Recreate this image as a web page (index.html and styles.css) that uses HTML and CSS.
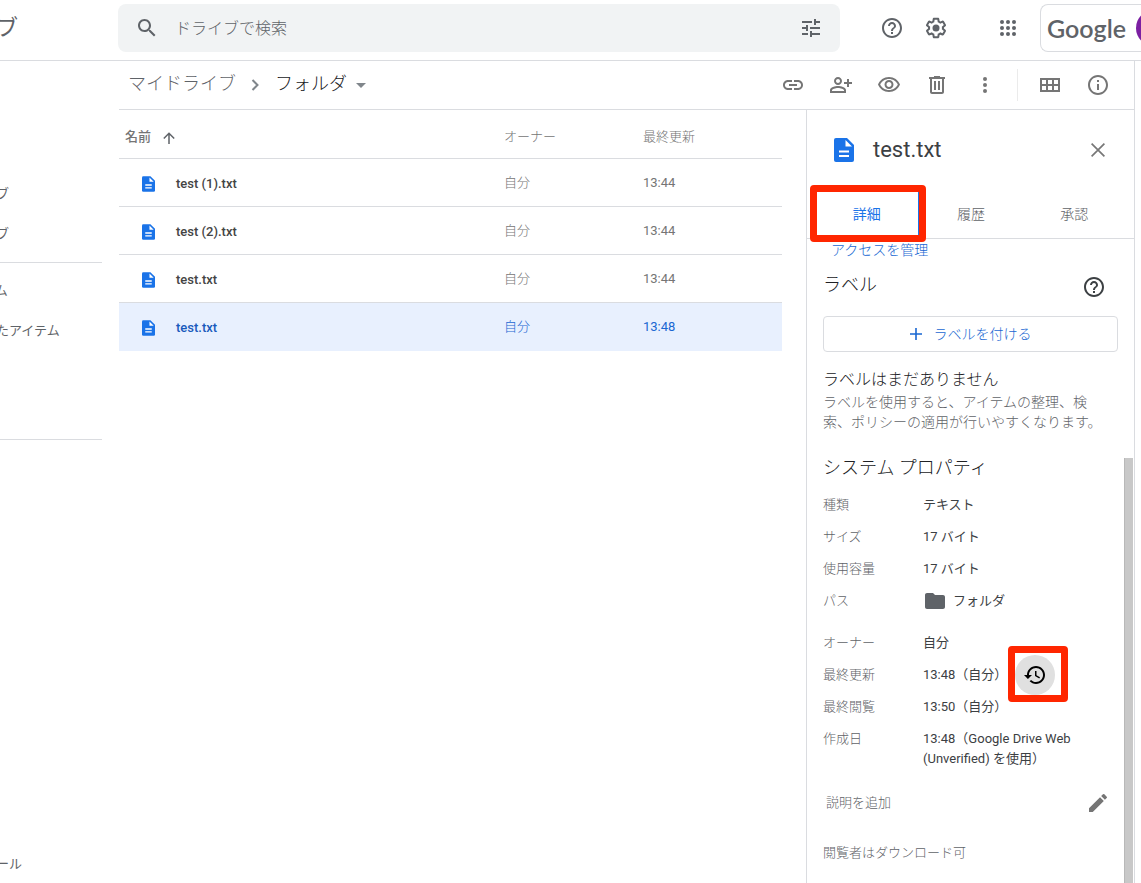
FILE: index.html
```html
<!DOCTYPE html>
<html lang="ja">
<head>
<meta charset="utf-8">
<title>フォルダ - ドライブ</title>
<link rel="stylesheet" href="styles.css">
</head>
<body>
<svg class="sprite" aria-hidden="true">
  <symbol id="doc" viewBox="0 0 20 24"><path fill="#1a73e8" d="M2 0h11l7 7v15a2 2 0 0 1-2 2H2a2 2 0 0 1-2-2V2a2 2 0 0 1 2-2z"/><path fill="#fff" d="M11.500 2v6.500H18zM5 12.500h10v2H5zM5 17h10v2H5z"/></symbol>
  <symbol id="help" viewBox="0 0 24 24"><path d="M11 18h2v-2h-2v2zm1-16C6.480 2 2 6.480 2 12s4.480 10 10 10 10-4.480 10-10S17.520 2 12 2zm0 18c-4.410 0-8-3.590-8-8s3.590-8 8-8 8 3.590 8 8-3.590 8-8 8zm0-14c-2.210 0-4 1.790-4 4h2c0-1.100.9-2 2-2s2 .9 2 2c0 2-3 1.750-3 5h2c0-2.250 3-2.500 3-5 0-2.210-1.790-4-4-4z"/></symbol>
</svg>

<header class="header">
  <a class="brand" href="#">ドライブ</a>
  <form class="search">
    <button class="icon-button" type="button" aria-label="検索"><svg class="icon" viewBox="0 0 24 24"><path d="M15.500 14h-.79l-.28-.27C15.410 12.590 16 11.110 16 9.500 16 5.910 13.090 3 9.500 3S3 5.910 3 9.500 5.910 16 9.500 16c1.610 0 3.090-.59 4.230-1.570l.27.28v.79l5 4.990L20.490 19l-4.990-5zm-6 0C7.010 14 5 11.990 5 9.500S7.010 5 9.500 5 14 7.010 14 9.500 11.990 14 9.500 14z"/></svg></button>
    <input class="search-input" type="text" placeholder="ドライブで検索" aria-label="ドライブで検索">
    <button class="icon-button" type="button" aria-label="検索オプション"><svg class="icon" viewBox="0 0 24 24"><path d="M3 17v2h6v-2H3zM3 5v2h10V5H3zm10 16v-2h8v-2h-8v-2h-2v6h2zM7 9v2H3v2h4v2h2V9H7zm14 4v-2H11v2h10zm-6-4h2V7h4V5h-4V3h-2v6z"/></svg></button>
  </form>
  <div class="header-actions">
    <button class="icon-button" type="button" aria-label="サポート"><svg class="icon"><use href="#help"/></svg></button>
    <button class="icon-button" type="button" aria-label="設定"><svg class="icon" viewBox="0 0 24 24"><path d="M13.850 22.250h-3.700c-.74 0-1.360-.54-1.450-1.270l-.27-1.890c-.27-.14-.53-.29-.79-.46l-1.800.72c-.7.26-1.470-.03-1.810-.65L2.200 15.530c-.35-.66-.2-1.440.36-1.880l1.530-1.190c-.01-.15-.02-.3-.02-.46 0-.15.01-.31.02-.46l-1.520-1.190c-.59-.45-.74-1.260-.37-1.880l1.850-3.190c.34-.62 1.110-.9 1.790-.63l1.810.73c.26-.17.52-.32.78-.46l.27-1.910c.09-.7.71-1.250 1.440-1.250h3.700c.74 0 1.360.54 1.450 1.270l.27 1.890c.27.14.53.29.79.46l1.800-.72c.71-.26 1.480.03 1.820.65l1.840 3.180c.36.66.2 1.440-.36 1.880l-1.520 1.190c.01.15.02.3.02.46s-.01.31-.02.46l1.520 1.190c.56.45.72 1.230.37 1.860l-1.860 3.220c-.34.62-1.110.9-1.800.63l-1.800-.72c-.26.17-.52.32-.78.46l-.27 1.910c-.1.68-.72 1.220-1.460 1.220zm-3.230-2h2.760l.37-2.550.53-.22c.44-.18.88-.44 1.340-.78l.45-.34 2.380.96 1.380-2.400-2.030-1.580.07-.56c.03-.26.06-.51.06-.78s-.03-.53-.06-.78l-.07-.56 2.030-1.580-1.390-2.400-2.390.96-.45-.35c-.42-.32-.87-.58-1.330-.77l-.52-.22-.37-2.550h-2.760l-.37 2.550-.53.21c-.44.19-.88.44-1.340.79l-.45.33-2.380-.95-1.390 2.390 2.030 1.580-.07.56a7 7 0 0 0-.06.79c0 .26.02.53.06.78l.07.56-2.030 1.580 1.380 2.400 2.390-.96.45.35c.43.33.86.58 1.330.77l.53.22.38 2.550z"/><circle cx="12" cy="12" r="3.500"/></svg></button>
    <button class="icon-button apps" type="button" aria-label="Google アプリ"><svg class="icon" viewBox="0 0 24 24"><circle cx="6" cy="6" r="2"/><circle cx="12" cy="6" r="2"/><circle cx="18" cy="6" r="2"/><circle cx="6" cy="12" r="2"/><circle cx="12" cy="12" r="2"/><circle cx="18" cy="12" r="2"/><circle cx="6" cy="18" r="2"/><circle cx="12" cy="18" r="2"/><circle cx="18" cy="18" r="2"/></svg></button>
  </div>
  <a class="account" href="#" aria-label="Google アカウント"><span class="wordmark">Google</span><span class="avatar"></span></a>
</header>

<div class="layout">
  <nav class="sidebar">
    <ul class="nav-group">
      <li><a href="#">マイドライブ</a></li>
      <li><a href="#">共有ドライブ</a></li>
    </ul>
    <ul class="nav-group nav-recent">
      <li><a href="#">共有アイテム</a></li>
      <li><a href="#">最近使用したアイテム</a></li>
    </ul>
    <ul class="nav-group nav-admin">
      <li><a href="#">管理コンソール</a></li>
    </ul>
  </nav>

  <main class="main">
    <div class="toolbar">
      <nav class="breadcrumb">
        <a class="crumb" href="#">マイドライブ</a>
        <svg class="crumb-arrow" viewBox="0 0 8 12"><path d="M1.500 1l5 5-5 5" fill="none" stroke="#80868b" stroke-width="2"/></svg>
        <button class="crumb crumb-current" type="button">フォルダ<svg class="caret" viewBox="0 0 10 5"><path d="M0 0h10L5 5z"/></svg></button>
      </nav>
      <div class="tools">
        <button type="button" aria-label="リンクを取得"><svg class="icon" viewBox="0 0 24 24"><path d="M3.900 12c0-1.710 1.390-3.100 3.100-3.100h4V7H7c-2.760 0-5 2.240-5 5s2.240 5 5 5h4v-1.900H7c-1.710 0-3.100-1.390-3.100-3.100zM8 13h8v-2H8v2zm9-6h-4v1.900h4c1.710 0 3.100 1.390 3.100 3.100s-1.390 3.100-3.100 3.100h-4V17h4c2.760 0 5-2.240 5-5s-2.240-5-5-5z"/></svg></button>
        <button type="button" aria-label="共有"><svg class="icon" viewBox="0 0 24 24"><path d="M9 12c2.210 0 4-1.790 4-4s-1.790-4-4-4-4 1.790-4 4 1.790 4 4 4zm0-6c1.100 0 2 .9 2 2s-.9 2-2 2-2-.9-2-2 .9-2 2-2zm0 7c-2.670 0-8 1.340-8 4v3h16v-3c0-2.660-5.330-4-8-4zm6 5H3v-.99C3.200 16.290 6.300 15 9 15s5.800 1.290 6 2v1zM20 9V6h-2v3h-3v2h3v3h2v-3h3V9z"/></svg></button>
        <button type="button" aria-label="プレビュー"><svg class="icon" viewBox="0 0 24 24"><path d="M12 6c3.790 0 7.170 2.130 8.820 5.500C19.170 14.870 15.790 17 12 17s-7.170-2.130-8.820-5.500C4.830 8.130 8.210 6 12 6m0-2C7 4 2.730 7.110 1 11.500 2.730 15.890 7 19 12 19s9.270-3.110 11-7.500C21.270 7.110 17 4 12 4zm0 5c1.380 0 2.500 1.120 2.500 2.500S13.380 14 12 14s-2.500-1.120-2.500-2.500S10.620 9 12 9m0-2c-2.480 0-4.500 2.020-4.500 4.500S9.520 16 12 16s4.500-2.020 4.500-4.500S14.480 7 12 7z"/></svg></button>
        <button type="button" aria-label="削除"><svg class="icon" viewBox="0 0 24 24"><path d="M15 4V3H9v1H4v2h1v13c0 1.100.9 2 2 2h10c1.100 0 2-.9 2-2V6h1V4h-5zm2 15H7V6h10v13zM9 8h2v9H9zm4 0h2v9h-2z"/></svg></button>
        <button type="button" aria-label="その他の操作"><svg class="icon" viewBox="0 0 24 24"><circle cx="12" cy="6" r="2"/><circle cx="12" cy="12" r="2"/><circle cx="12" cy="18" r="2"/></svg></button>
        <span class="divider"></span>
        <button type="button" aria-label="グリッド表示"><svg class="icon" viewBox="0 0 24 24"><path fill-rule="evenodd" d="M2 5h20v14H2zM4 7v4h4V7zm6 0v4h4V7zm6 0v4h4V7zM4 13v4h4v-4zm6 0v4h4v-4zm6 0v4h4v-4z"/></svg></button>
        <button type="button" aria-label="詳細を表示"><svg class="icon" viewBox="0 0 24 24"><path d="M11 7h2v2h-2zm0 4h2v6h-2zm1-9C6.480 2 2 6.480 2 12s4.480 10 10 10 10-4.480 10-10S17.520 2 12 2zm0 18c-4.410 0-8-3.590-8-8s3.590-8 8-8 8 3.590 8 8-3.590 8-8 8z"/></svg></button>
      </div>
    </div>

    <div class="content">
      <div class="file-list">
        <table class="files">
          <colgroup><col><col class="col-meta"><col class="col-meta"></colgroup>
          <thead>
            <tr><th class="th-name" scope="col"><span class="sort">名前<svg class="sort-arrow" viewBox="0 0 12 12"><path d="M6 12V1.500M.8 6.500L6 1.300l5.200 5.200" fill="none" stroke="#5f6368" stroke-width="1.500"/></svg></span></th><th scope="col">オーナー</th><th scope="col">最終更新</th></tr>
          </thead>
          <tbody>
            <tr><td><span class="file"><svg class="file-icon"><use href="#doc"/></svg>test (1).txt</span></td><td>自分</td><td>13:44</td></tr>
            <tr><td><span class="file"><svg class="file-icon"><use href="#doc"/></svg>test (2).txt</span></td><td>自分</td><td>13:44</td></tr>
            <tr><td><span class="file"><svg class="file-icon"><use href="#doc"/></svg>test.txt</span></td><td>自分</td><td>13:44</td></tr>
            <tr class="selected"><td><span class="file"><svg class="file-icon"><use href="#doc"/></svg>test.txt</span></td><td>自分</td><td>13:48</td></tr>
          </tbody>
        </table>
      </div>

      <aside class="panel">
        <div class="panel-head">
          <svg class="panel-icon"><use href="#doc"/></svg>
          <h2 class="panel-title">test.txt</h2>
          <button class="close" type="button" aria-label="閉じる"><svg viewBox="0 0 14 14"><path d="M.6.6l12.800 12.800M13.400.6L.6 13.400" stroke="#777" stroke-width="1.700"/></svg></button>
        </div>
        <div class="tabs" role="tablist">
          <button class="tab active" type="button" role="tab" aria-selected="true">詳細<span class="mark mark-tab"></span></button>
          <button class="tab" type="button" role="tab">履歴</button>
          <button class="tab" type="button" role="tab">承認</button>
        </div>
        <div class="panel-body">
          <a class="manage" href="#">アクセスを管理</a>
          <div class="label-head">
            <h3>ラベル</h3>
            <button class="help" type="button" aria-label="ラベルのヘルプ"><svg class="icon"><use href="#help"/></svg></button>
          </div>
          <button class="add-label" type="button"><svg viewBox="0 0 12 12"><path d="M6 0v12M0 6h12" stroke="#1967d2" stroke-width="1.600"/></svg>ラベルを付ける</button>
          <h4 class="empty-title">ラベルはまだありません</h4>
          <p class="empty-text">ラベルを使用すると、アイテムの整理、検索、ポリシーの適用が行いやすくなります。</p>
          <h3 class="props-title">システム プロパティ</h3>
          <dl class="props">
            <dt>種類</dt><dd>テキスト</dd>
            <dt>サイズ</dt><dd>17 バイト</dd>
            <dt>使用容量</dt><dd>17 バイト</dd>
            <dt>パス</dt><dd class="path"><svg class="icon" viewBox="0 0 24 24"><path d="M10 4H4c-1.100 0-2 .9-2 2v12c0 1.100.9 2 2 2h16c1.100 0 2-.9 2-2V8c0-1.100-.9-2-2-2h-8l-2-2z"/></svg>フォルダ</dd>
          </dl>
          <dl class="props">
            <dt>オーナー</dt><dd>自分</dd>
            <dt>最終更新</dt><dd class="modified">13:48（自分）<button class="history" type="button" aria-label="版を管理"><svg class="icon" viewBox="0 0 24 24"><path d="M13 3c-4.970 0-9 4.030-9 9H1l3.890 3.890.07.14L9 12H6c0-3.870 3.130-7 7-7s7 3.130 7 7-3.130 7-7 7c-1.930 0-3.680-.79-4.940-2.060l-1.420 1.420C8.270 19.990 10.510 21 13 21c4.970 0 9-4.030 9-9s-4.030-9-9-9zm-1 5v5l4.280 2.540.72-1.210-3.500-2.080V8H12z"/></svg><span class="mark mark-history"></span></button></dd>
            <dt>最終閲覧</dt><dd>13:50（自分）</dd>
            <dt>作成日</dt><dd>13:48（Google Drive Web (Unverified) を使用）</dd>
          </dl>
          <div class="description">
            <span>説明を追加</span>
            <button class="edit" type="button" aria-label="説明を編集"><svg class="icon" viewBox="0 0 24 24"><path d="M3 17.250V21h3.750L17.810 9.940l-3.750-3.750L3 17.250zM20.710 7.040a1 1 0 0 0 0-1.410l-2.340-2.340a1 1 0 0 0-1.410 0l-1.830 1.830 3.750 3.750 1.830-1.830z"/></svg></button>
          </div>
          <p class="permission">閲覧者はダウンロード可</p>
        </div>
        <span class="scrollbar"></span>
      </aside>
    </div>
  </main>
</div>
</body>
</html>
```

FILE: styles.css
```css
* {
  box-sizing: border-box;
}

body {
  display: flex;
  flex-direction: column;
  height: 100vh;
  margin: 0;
  overflow: hidden;
  background: #fff;
  color: #5f6368;
  font: 300 13px/20px Roboto, "Noto Sans CJK JP", sans-serif;
}

h2, h3, h4, p, ul, dl, dd {
  margin: 0;
  padding: 0;
  font-weight: inherit;
}

ul {
  list-style: none;
}

a {
  color: inherit;
  text-decoration: none;
}

button {
  display: flex;
  align-items: center;
  justify-content: center;
  padding: 0;
  border: 0;
  background: none;
  color: inherit;
  font: inherit;
}

.sprite {
  display: none;
}

.icon {
  flex: none;
  width: 24px;
  height: 24px;
  fill: currentColor;
}

.icon-button {
  flex: none;
  width: 40px;
  height: 40px;
}

/* Header */
.header {
  display: flex;
  flex: none;
  align-items: center;
  height: 61px;
  padding-bottom: 5px;
  overflow: hidden;
  border-bottom: 1px solid #dadce0;
}

.brand {
  flex: none;
  width: 188px;
  margin-left: -70px;
  font-size: 22px;
  font-weight: 400;
  line-height: 32px;
}

.search {
  display: flex;
  flex: 1;
  align-items: center;
  height: 48px;
  margin-top: 1px;
  padding: 0 9px;
  border-radius: 8px;
  background: #f1f3f4;
}

.search-input {
  flex: 1;
  min-width: 0;
  height: 40px;
  padding: 0 8px;
  border: 0;
  outline: 0;
  background: none;
  color: #3c4043;
  font: inherit;
  font-size: 16px;
}

.search-input::placeholder {
  color: #5f6368;
}

.header-actions {
  display: flex;
  flex: none;
  gap: 4px;
  padding: 0 12px 0 32px;
}

.apps {
  margin-left: 28px;
}

.account {
  display: flex;
  flex: none;
  align-items: center;
  width: 101px;
  height: 48px;
  padding-left: 6px;
  overflow: hidden;
  border: 1px solid #dadce0;
  border-right: 0;
  border-radius: 8px 0 0 8px;
}

.wordmark {
  flex: none;
  width: 89px;
  font: 600 25px/32px Lato, sans-serif;
}

.avatar {
  flex: none;
  width: 36px;
  height: 36px;
  border-radius: 50%;
  background: #7b1fa2;
}

/* Page columns */
.layout {
  display: flex;
  flex: 1;
  min-height: 0;
  padding-right: 6px;
}

.sidebar {
  display: flex;
  flex: none;
  flex-direction: column;
  width: 102px;
  margin-right: 17px;
  padding-top: 112px;
}

.nav-group {
  padding-bottom: 9px;
  white-space: nowrap;
}

.nav-group a {
  display: block;
  margin-left: -69px;
  padding: 11px 0 9px;
  font-weight: 400;
}

.nav-recent {
  padding: 7px 0 89px;
  border: solid #dadce0;
  border-width: 1px 0;
}

.nav-admin {
  margin-top: auto;
  padding: 0;
}

.main {
  display: flex;
  flex: 1;
  flex-direction: column;
  min-width: 0;
  border-right: 1px solid #dadce0;
}

.toolbar {
  display: flex;
  flex: none;
  align-items: center;
  justify-content: space-between;
  height: 49px;
  padding: 0 12px 0 9px;
  border-bottom: 1px solid #dadce0;
}

.breadcrumb {
  display: flex;
  align-items: center;
  padding-bottom: 3px;
}

.crumb {
  font-size: 18px;
  line-height: 24px;
}

.crumb-current {
  color: #202124;
}

.crumb-arrow {
  width: 8px;
  height: 12px;
  margin: 3px 16px 0 15px;
}

.caret {
  width: 10px;
  height: 5px;
  margin: 4px 0 0 9px;
  fill: #80868b;
}

.tools {
  display: flex;
  align-items: center;
  color: #757575;
}

.tools button {
  width: 48px;
  height: 48px;
}

.divider {
  width: 1px;
  height: 32px;
  margin: 0 8px;
  background: #ebebeb;
}

.content {
  display: flex;
  flex: 1;
  min-height: 0;
}

/* File list */
.file-list {
  flex: 1;
  padding-right: 24px;
}

.files {
  width: 100%;
  border-collapse: separate;
  border-spacing: 0;
  table-layout: fixed;
  color: #757575;
}

.col-meta {
  width: 139px;
}

.files th,
.files td {
  height: 48px;
  padding: 0;
  border-bottom: 1px solid #dadce0;
  text-align: left;
  font-weight: 400;
}

.files td {
  font-weight: 300;
}

.files td:last-child {
  font-weight: 400;
}

.files th {
  height: 49px;
  padding-top: 6px;
  font-weight: 300;
}

.files .th-name {
  padding-left: 6px;
  font-weight: 500;
}

.sort {
  display: flex;
  align-items: center;
  gap: 12px;
}

.sort-arrow {
  width: 12px;
  height: 12px;
  margin-top: 2px;
}

.file {
  display: flex;
  align-items: center;
  gap: 21px;
  padding: 2px 0 0 23px;
  color: #444;
  font-weight: 500;
}

.file-icon {
  width: 13px;
  height: 16px;
}

.files .selected td {
  border-color: #e8f0fe;
  background: #e8f0fe;
  color: #1967d2;
}

.selected .file {
  color: #185abc;
}

/* Details panel */
.panel {
  position: relative;
  flex: none;
  width: 328px;
  border-left: 1px solid #dadce0;
  color: #202124;
}

.panel-head {
  display: flex;
  align-items: center;
  height: 80px;
  padding: 0 16px 0 27px;
}

.panel-icon {
  width: 20px;
  height: 24px;
}

.panel-title {
  flex: 1;
  padding-left: 19px;
  color: #3c4043;
  font-size: 22px;
  font-weight: 400;
  line-height: 28px;
}

.close {
  width: 40px;
  height: 40px;
}

.close svg {
  width: 14px;
  height: 14px;
}

.tabs {
  display: flex;
  height: 49px;
  padding: 0 8px;
  border-bottom: 1px solid #dadce0;
}

.tab {
  position: relative;
  flex: 1;
  color: #5f6368;
  font-size: 14px;
}

.tab.active {
  border-right: 1px solid #1a73e8;
  color: #1a73e8;
  font-weight: 400;
}

.mark {
  position: absolute;
  border: 7px solid #ff2600;
  border-radius: 4px;
}

.mark-tab {
  inset: -5px -8px -4px -5px;
}

.panel-body {
  padding: 0 16px;
}

.manage {
  display: block;
  padding: 1px 8px 0;
  color: #1967d2;
  font-size: 14px;
}

.label-head {
  display: flex;
  align-items: center;
  justify-content: space-between;
  height: 56px;
  padding-bottom: 3px;
}

h3 {
  padding-bottom: 4px;
  font-size: 18px;
  line-height: 24px;
}

.help {
  width: 48px;
  height: 48px;
  color: #3c4043;
}

.add-label {
  gap: 12px;
  width: 100%;
  height: 36px;
  border: 1px solid #dadce0;
  border-radius: 4px;
  color: #1967d2;
  font-size: 14px;
}

.add-label svg {
  width: 12px;
  height: 12px;
}

.empty-title {
  padding-top: 16px;
  font-size: 16px;
  line-height: 24px;
}

.empty-text {
  padding-right: 14px;
  color: #5f6368;
  font-size: 14px;
}

.props-title {
  padding-top: 24px;
}

.props {
  display: grid;
  grid-template-columns: 100px 1fr;
  row-gap: 12px;
  padding-top: 11px;
}

.props + .props {
  padding-top: 22px;
}

.props dt {
  color: #5f6368;
}

.props dd {
  color: #3c4043;
  font-weight: 400;
}

.path,
.modified {
  display: flex;
  align-items: center;
  height: 20px;
}

.path {
  gap: 6px;
}

.path .icon {
  color: #5f6368;
}

.history {
  position: relative;
  width: 40px;
  height: 40px;
  margin-left: 8px;
  border-radius: 50%;
  background: #e0e0e0;
  color: #000;
}

.mark-history {
  inset: -9px -13px -7px -7px;
}

.description {
  display: flex;
  align-items: center;
  justify-content: space-between;
  padding: 14px 0 0 3px;
  color: #5f6368;
}

.edit {
  width: 40px;
  height: 40px;
  color: #757575;
}

.permission {
  padding-top: 20px;
  color: #5f6368;
}

.scrollbar {
  position: absolute;
  top: 348px;
  right: 1px;
  bottom: 0;
  width: 9px;
  border-left: 1px solid #b8b8b8;
  background: #c8c8c8;
}
```
